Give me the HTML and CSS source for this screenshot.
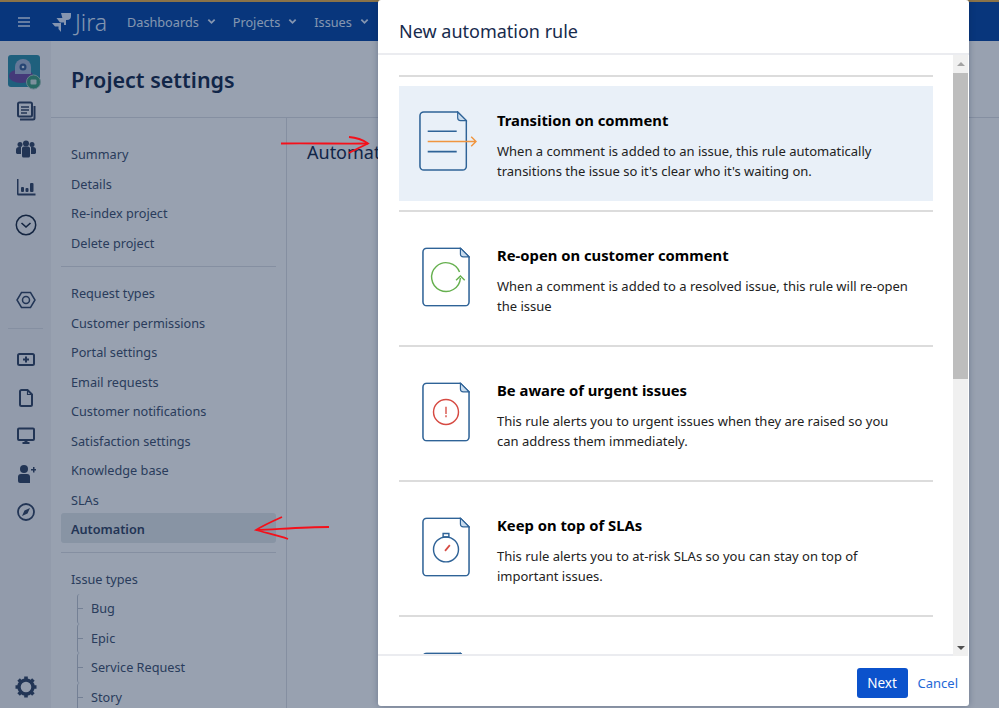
FILE: index.html
```html
<!DOCTYPE html>
<html lang="en">
<head>
    <meta charset="UTF-8">
    <title>New automation rule</title>
    <link rel="stylesheet" href="styles.css">
</head>
<body>
    <svg class="defs" width="0" height="0">
        <symbol id="doc" viewBox="0 0 50 62">
            <path d="M5 1H40L49 10V57a4 4 0 0 1-4 4H5a4 4 0 0 1-4-4V5a4 4 0 0 1 4-4Z" fill="none" stroke="#2f6397" stroke-width="1.6"/>
            <path d="M40 1V7a3 3 0 0 0 3 3H49Z" fill="#c9dcee" stroke="#2f6397" stroke-width="1.2"/>
        </symbol>
    </svg>

    <div class="page">
        <header class="topnav">
            <svg class="burger" width="14" height="12" viewBox="0 0 14 12"><path d="M1 2H13M1 6H13M1 10H13" stroke="#deebff" stroke-width="1.6"/></svg>
            <div class="logo">
                <svg width="20" height="20" viewBox="0 0 20 20" fill="#deebff"><path d="M9 1H19V4a4 4 0 0 1-4 4H13V6.500H10.500Z"/><path d="M4.500 6H14V13H12V10.500H8Z"/><path d="M0 11H9V20L6.500 17V14.500H3Z"/></svg>
                <span>Jira</span>
            </div>
            <a class="navlink">Dashboards <svg width="9" height="7" viewBox="0 0 10 7"><path d="M1.500 1.500 5 5 8.500 1.500" fill="none" stroke="#deebff" stroke-width="2"/></svg></a>
            <a class="navlink">Projects <svg width="9" height="7" viewBox="0 0 10 7"><path d="M1.500 1.500 5 5 8.500 1.500" fill="none" stroke="#deebff" stroke-width="2"/></svg></a>
            <a class="navlink">Issues <svg width="9" height="7" viewBox="0 0 10 7"><path d="M1.500 1.500 5 5 8.500 1.500" fill="none" stroke="#deebff" stroke-width="2"/></svg></a>
        </header>

        <div class="content">
            <nav class="rail">
                <div class="avatar">
                    <svg class="avatar-img" width="32" height="32" viewBox="0 0 32 32">
                        <rect width="32" height="32" rx="3" fill="#2f8fa8"/>
                        <ellipse cx="13" cy="21" rx="12" ry="7" fill="#6f4ea1"/>
                        <path d="M7 19V12a8 8 0 0 1 16 0V19Z" fill="#a9b9d6"/>
                        <circle cx="15" cy="12" r="3.500" fill="#3b5f96"/>
                        <circle cx="15" cy="12" r="1.300" fill="#d7e2f1"/>
                        <circle cx="25.500" cy="27" r="7" fill="#3f9f7c" stroke="#a9c9c0"/>
                        <rect x="22.500" y="24.500" width="6" height="5" rx="1" fill="#cfe2dc"/>
                    </svg>
                </div>
                <svg class="rail-icon" width="20" height="20" viewBox="0 0 20 20" fill="none" stroke="#344563" stroke-width="2"><rect x="2" y="1.500" width="14" height="14" rx="1.500"/><path d="M5 6H13M5 9H13M5 12H11" stroke-width="1.500"/><path d="M18.500 5V17a1.500 1.500 0 0 1-1.500 1.500H4"/></svg>
                <svg class="rail-icon" width="20" height="20" viewBox="0 0 20 20" fill="#344563"><circle cx="4" cy="5.500" r="2.500"/><circle cx="16" cy="5.500" r="2.500"/><circle cx="10" cy="4.500" r="3"/><path d="M0 14V11a3 3 0 0 1 3-3H5V15H1Z"/><path d="M20 14V11a3 3 0 0 0-3-3H15V15H19Z"/><path d="M6 9a2 2 0 0 1 2-1.500H12A2 2 0 0 1 14 9V17a1.500 1.500 0 0 1-1.500 1.500H7.500A1.500 1.500 0 0 1 6 17Z"/></svg>
                <svg class="rail-icon rail-tight" width="20" height="20" viewBox="0 0 20 20" fill="#344563"><path d="M1 2H2.500V16.500H19.500V18.500H2.500A1.500 1.500 0 0 1 1 17Z"/><rect x="5" y="10" width="3" height="5" rx="1"/><rect x="9.500" y="11" width="3" height="4" rx="1"/><rect x="14" y="6" width="3.500" height="9" rx="1"/></svg>
                <svg class="rail-icon" width="22" height="22" viewBox="0 0 22 22" fill="none" stroke="#1c2a40"><circle cx="11" cy="11" r="9.700" stroke-width="1.500"/><path d="M6.500 9 11 13 15.500 9" stroke-width="1.600"/></svg>
                <svg class="rail-icon rail-gap" width="20" height="20" viewBox="0 0 20 20" fill="none" stroke="#344563" stroke-width="1.500"><path d="M5.500 2.500H14.500L19 10 14.500 17.500H5.500L1 10Z"/><circle cx="10" cy="10" r="3.500"/></svg>
                <div class="rail-rule"></div>
                <svg class="rail-icon" width="20" height="20" viewBox="0 0 20 20"><rect x="2" y="4" width="16" height="11" rx="1.500" fill="none" stroke="#344563" stroke-width="2"/><path d="M10 6.500V12.500M7 9.500H13" stroke="#344563" stroke-width="2"/></svg>
                <svg class="rail-icon" width="20" height="20" viewBox="0 0 20 20" fill="none" stroke="#344563" stroke-width="2"><path d="M5.500 2H11.500L16 6.500V16.500a1.500 1.500 0 0 1-1.500 1.500H5.500A1.500 1.500 0 0 1 4 16.500V3.500A1.500 1.500 0 0 1 5.500 2Z"/><path d="M11.500 2V6.500H16" stroke-width="1.200"/></svg>
                <svg class="rail-icon" width="20" height="20" viewBox="0 0 20 20"><rect x="2" y="2.500" width="16" height="11.500" rx="1" fill="none" stroke="#344563" stroke-width="2"/><path d="M8.500 14H11.500V16H13.500V18H6.500V16H8.500Z" fill="#344563"/></svg>
                <svg class="rail-icon" width="20" height="20" viewBox="0 0 20 20" fill="#344563"><circle cx="8" cy="5" r="4"/><path d="M2 13a3 3 0 0 1 3-3H11a3 3 0 0 1 3 3V19H4a2 2 0 0 1-2-2Z"/><path d="M15 5H17V3H18.500V5H20V6.500H18.500V8.500H17V6.500H15Z"/></svg>
                <svg class="rail-icon" width="20" height="20" viewBox="0 0 20 20"><circle cx="10" cy="10" r="8" fill="none" stroke="#344563" stroke-width="1.800"/><path d="M14 6 11.500 11.500 6 14 8.500 8.500Z" fill="#344563"/></svg>
                <svg class="rail-gear" width="22" height="22" viewBox="0 0 22 22"><circle cx="11" cy="11" r="7" fill="none" stroke="#344563" stroke-width="3.400"/><path d="M11 0.500V21.500M0.500 11H21.500M3.600 3.600 18.400 18.400M18.400 3.600 3.600 18.400" stroke="#344563" stroke-width="3.600" stroke-dasharray="3.500 14 3.500"/></svg>
            </nav>

            <div class="settings">
                <h1 class="settings-title">Project settings</h1>
                <div class="settings-body">
                    <aside class="menu">
                        <ul class="menu-group">
                            <li>Summary</li>
                            <li>Details</li>
                            <li>Re-index project</li>
                            <li>Delete project</li>
                        </ul>
                        <ul class="menu-group">
                            <li>Request types</li>
                            <li>Customer permissions</li>
                            <li>Portal settings</li>
                            <li>Email requests</li>
                            <li>Customer notifications</li>
                            <li>Satisfaction settings</li>
                            <li>Knowledge base</li>
                            <li>SLAs</li>
                            <li class="active">Automation</li>
                        </ul>
                        <ul class="menu-group">
                            <li>Issue types</li>
                            <li class="sub">Bug</li>
                            <li class="sub">Epic</li>
                            <li class="sub">Service Request</li>
                            <li class="sub">Story</li>
                        </ul>
                    </aside>
                    <main class="main">
                        <h2>Automation</h2>
                    </main>
                </div>
            </div>
        </div>
    </div>

    <div class="overlay"></div>

    <section class="modal">
        <h3 class="modal-head">New automation rule</h3>
        <div class="modal-body">
            <div class="rules">
                <div class="rule selected">
                    <svg class="doc first" viewBox="0 0 60 62" width="58" height="60">
                        <use href="#doc" width="50" height="62"/>
                        <path d="M9 21H39M9 42H39" stroke="#2f6397" stroke-width="1.600"/>
                        <path d="M9 31.500H59M54 26.500 59 31.500 54 36.500" fill="none" stroke="#f0953f" stroke-width="1.500"/>
                    </svg>
                    <div class="rule-text">
                        <h4>Transition on comment</h4>
                        <p>When a comment is added to an issue, this rule automatically transitions the issue so it's clear who it's waiting on.</p>
                    </div>
                </div>
                <div class="rule">
                    <svg class="doc" viewBox="0 0 50 62" width="48" height="60">
                        <use href="#doc" width="50" height="62"/>
                        <path d="M39.100 25.900A15 15 0 1 0 40 32" fill="none" stroke="#66b04f" stroke-width="1.500"/>
                        <path d="M35.500 34.500 40 30 44.500 34.500" fill="none" stroke="#66b04f" stroke-width="1.500"/>
                    </svg>
                    <div class="rule-text">
                        <h4>Re-open on customer comment</h4>
                        <p>When a comment is added to a resolved issue, this rule will re-open the issue</p>
                    </div>
                </div>
                <div class="rule">
                    <svg class="doc" viewBox="0 0 50 62" width="48" height="60">
                        <use href="#doc" width="50" height="62"/>
                        <circle cx="25" cy="31" r="13" fill="none" stroke="#d64a42" stroke-width="1.500"/>
                        <path d="M25 25.500V33M25 34.500V36.500" stroke="#d64a42" stroke-width="1.400"/>
                    </svg>
                    <div class="rule-text">
                        <h4>Be aware of urgent issues</h4>
                        <p>This rule alerts you to urgent issues when they are raised so you can address them immediately.</p>
                    </div>
                </div>
                <div class="rule">
                    <svg class="doc" viewBox="0 0 50 62" width="48" height="60">
                        <use href="#doc" width="50" height="62"/>
                        <circle cx="25" cy="33.500" r="13" fill="none" stroke="#2f6397" stroke-width="1.500"/>
                        <path d="M22 17H28V20.500H22Z" fill="none" stroke="#2f6397" stroke-width="1.500"/>
                        <path d="M24 35 29 29" stroke="#d64a42" stroke-width="1.800"/>
                    </svg>
                    <div class="rule-text">
                        <h4>Keep on top of SLAs</h4>
                        <p>This rule alerts you to at-risk SLAs so you can stay on top of important issues.</p>
                    </div>
                </div>
                <div class="rule">
                    <svg class="doc" viewBox="0 0 50 62" width="48" height="60">
                        <use href="#doc" width="50" height="62"/>
                    </svg>
                </div>
            </div>
            <div class="scrollbar">
                <div class="scroll-btn"><span class="tri-up"></span></div>
                <div class="scroll-track"><div class="scroll-thumb"></div></div>
                <div class="scroll-btn"><span class="tri-down"></span></div>
            </div>
        </div>
        <footer class="modal-foot">
            <button class="btn-next">Next</button>
            <a class="btn-cancel">Cancel</a>
        </footer>
    </section>

    <!-- red annotations drawn on top of the screenshot -->
    <svg class="scribble" width="999" height="708" viewBox="0 0 999 708" fill="none" stroke="#f5101a" stroke-width="1.800">
        <path d="M281 143.500C310 143 340 144 368 143.500"/>
        <path d="M349 137C356 137.500 363 140 368 143.500 363 146 356 149 349 153"/>
        <path d="M329 527C305 527 280 529 256 530"/>
        <path d="M282 517C273 521 264 525 256 530 266 533 278 535 288 539"/>
    </svg>
</body>
</html>
```

FILE: styles.css
```css
* {
    box-sizing: border-box;
}

body {
    margin: 0;
    width: 999px;
    height: 708px;
    position: relative;
    overflow: hidden;
    font-family: "Noto Sans", "Open Sans", sans-serif;
    font-size: 12.700px;
    color: #172b4d;
    background-color: #fff;
}

ul {
    list-style: none;
    margin: 0;
    padding: 0;
}

.defs {
    position: absolute;
}

.page {
    height: 708px;
    display: flex;
    flex-direction: column;
    border-top: 2px solid #e8b04c;
}

.topnav {
    height: 39px;
    flex-shrink: 0;
    display: flex;
    align-items: center;
    padding-left: 17px;
    background-color: #0747a6;
    color: #deebff;
}

.burger {
    margin-right: 21px;
}

.logo {
    display: flex;
    align-items: center;
    gap: 3px;
    width: 75px;
    font-size: 23px;
    font-weight: 300;
}

.navlink {
    display: flex;
    align-items: center;
    gap: 8px;
    margin-right: 17px;
    white-space: nowrap;
}

.content {
    flex: 1;
    display: flex;
    min-height: 0;
}

.rail {
    width: 51px;
    flex-shrink: 0;
    display: flex;
    flex-direction: column;
    align-items: center;
    padding: 14px 0 10px;
    background-color: #f4f5f7;
}

.avatar {
    height: 32px;
    margin-bottom: 14px;
    margin-right: 4px;
}

.avatar-img {
    overflow: visible;
}

.rail-icon {
    margin-bottom: 18px;
    flex-shrink: 0;
}

.rail-tight {
    margin-bottom: 17px;
}

.rail-gap {
    margin-top: 36px;
}

.rail-rule {
    width: 35px;
    height: 1px;
    margin: 0 0 21px;
    background-color: #dfe1e6;
}

.rail-gear {
    margin-top: auto;
}

.settings {
    flex: 1;
    display: flex;
    flex-direction: column;
    min-width: 0;
}

.settings-title {
    height: 77px;
    margin: 0;
    padding: 22px 0 0 20px;
    border-bottom: 1px solid #dfe1e6;
    font-size: 21.500px;
    font-weight: 600;
    line-height: 34px;
}

.settings-body {
    flex: 1;
    display: flex;
    min-height: 0;
}

.menu {
    width: 236px;
    flex-shrink: 0;
    padding: 22px 10px 0;
    border-right: 1px solid #dfe1e6;
    color: #42526e;
}

.menu-group {
    padding-bottom: 8px;
    margin-bottom: 12px;
    border-bottom: 1px solid #dfe1e6;
}

.menu-group:last-child {
    border-bottom: none;
}

.menu li {
    height: 29.500px;
    line-height: 28.500px;
    padding-left: 10px;
    border-radius: 3px;
}

.menu li.active {
    margin: -2px 0 1px;
    line-height: 32.500px;
    font-weight: 600;
    color: #344563;
    background-color: #e3e8eb;
}

.menu li.sub {
    position: relative;
    margin-left: 16px;
    padding-left: 13px;
    border-left: 1px solid #c1c7d0;
}

.menu li.sub::before {
    content: "";
    position: absolute;
    top: 14px;
    left: 0;
    width: 5px;
    height: 1px;
    background-color: #c1c7d0;
}

.main {
    flex: 1;
    padding: 22px 0 0 20px;
}

.main h2 {
    margin: 0;
    font-size: 18px;
    font-weight: 400;
}

.overlay {
    position: absolute;
    top: 0;
    left: 0;
    width: 100%;
    height: 100%;
    background-color: rgba(9, 30, 66, 0.42);
}

.modal {
    position: absolute;
    top: 0;
    left: 378px;
    width: 591px;
    height: 706px;
    display: flex;
    flex-direction: column;
    background-color: #fff;
    border-radius: 3px;
    box-shadow: 0 0 6px rgba(9, 30, 66, 0.3);
}

.modal-head {
    height: 55px;
    flex-shrink: 0;
    margin: 0;
    padding: 17px 0 0 21px;
    border-bottom: 2px solid #ebecf0;
    font-size: 18px;
    font-weight: 400;
    line-height: 28px;
}

.modal-body {
    flex: 1;
    display: flex;
    min-height: 0;
}

.rules {
    flex: 1;
    padding: 20px 20px 0 21px;
    overflow: hidden;
    border-bottom: 2px solid #ebecf0;
}

.rule {
    height: 135px;
    display: flex;
    align-items: flex-start;
    padding: 35px 0 0 23px;
    border-top: 2px solid #dcdcdc;
}

.rule.selected {
    padding-left: 20px;
    background: linear-gradient(#fff 9px, #e9f0f8 9px, #e9f0f8 124px, #fff 124px);
}

.doc {
    flex-shrink: 0;
    margin-right: 27px;
}

.doc.first {
    margin: -1px 20px 0 0;
}

.rule-text {
    margin-top: -2px;
    width: 414px;
}

.rule-text h4 {
    margin: 0 0 11px;
    font-size: 14.800px;
    font-weight: 700;
    line-height: 20px;
    color: #000;
}

.rule-text p {
    margin: 0;
    font-size: 13px;
    line-height: 20px;
    color: #222;
}

.scrollbar {
    width: 15px;
    margin-right: 1px;
    display: flex;
    flex-direction: column;
    background-color: #f0f0f0;
}

.scroll-btn {
    height: 17px;
    display: flex;
    align-items: center;
    justify-content: center;
}

.tri-up,
.tri-down {
    width: 0;
    height: 0;
    border-left: 4px solid transparent;
    border-right: 4px solid transparent;
}

.tri-up {
    border-bottom: 4px solid #a3a3a3;
}

.tri-down {
    border-top: 4px solid #505050;
}

.scroll-track {
    flex: 1;
}

.scroll-thumb {
    height: 306px;
    margin-top: 1px;
    background-color: #bdbdbd;
}

.modal-foot {
    height: 50px;
    flex-shrink: 0;
    display: flex;
    justify-content: flex-end;
    align-items: center;
    gap: 10px;
    padding: 3px 11px 0 0;
    font-size: 13px;
}

.btn-next {
    width: 51px;
    height: 30px;
    border: none;
    border-radius: 3px;
    background-color: #0b52cc;
    color: #fff;
    font-family: inherit;
    font-size: 13.500px;
}

.btn-cancel {
    color: #2468d6;
}

.scribble {
    position: absolute;
    top: 0;
    left: 0;
    pointer-events: none;
}
```
